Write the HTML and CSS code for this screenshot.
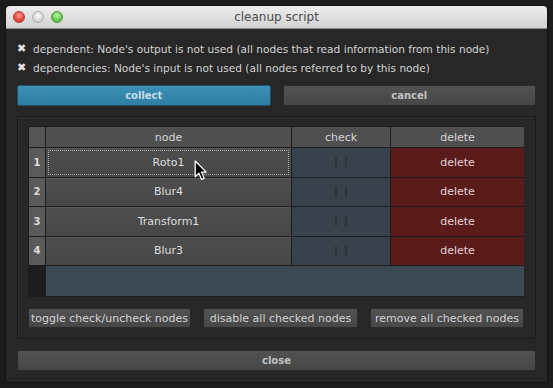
FILE: index.html
```html
<!DOCTYPE html>
<html lang="en">
<head>
<meta charset="UTF-8">
<title>cleanup script</title>
<link rel="stylesheet" href="styles.css">
</head>
<body>
<div class="window">
    <div class="titlebar">
        <div class="lights">
            <span class="light red"></span>
            <span class="light gray"></span>
            <span class="light green"></span>
        </div>
        <div class="title">cleanup script</div>
        <div></div>
    </div>
    <div class="content">
        <div class="options">
            <label class="option"><span class="tick">&#10006;</span>dependent: Node's output is not used (all nodes that read information from this node)</label>
            <label class="option"><span class="tick">&#10006;</span>dependencies: Node's input is not used (all nodes referred to by this node)</label>
        </div>
        <div class="button-row">
            <button class="button primary">collect</button>
            <button class="button">cancel</button>
        </div>
        <div class="group">
            <div class="table">
                <div class="corner"></div>
                <div class="head">node</div>
                <div class="head">check</div>
                <div class="head">delete</div>

                <div class="num">1</div>
                <div class="node focused"><span>Roto1</span></div>
                <div class="check"><span class="box"></span></div>
                <div class="del">delete</div>

                <div class="num">2</div>
                <div class="node"><span>Blur4</span></div>
                <div class="check"><span class="box"></span></div>
                <div class="del">delete</div>

                <div class="num">3</div>
                <div class="node"><span>Transform1</span></div>
                <div class="check"><span class="box"></span></div>
                <div class="del">delete</div>

                <div class="num">4</div>
                <div class="node"><span>Blur3</span></div>
                <div class="check"><span class="box"></span></div>
                <div class="del">delete</div>

                <div class="corner"></div>
                <div class="filler"></div>

                <svg class="cursor" width="14" height="21" viewBox="0 0 13 20">
                    <path d="M1 1 L1 16 L4.5 12.5 L7 18.5 L9.5 17.5 L7 11.5 L11.5 11.5 Z" fill="#000" stroke="#fff" stroke-width="1.2" stroke-linejoin="round"/>
                </svg>
            </div>
            <div class="actions">
                <button class="button small">toggle check/uncheck nodes</button>
                <button class="button small">disable all checked nodes</button>
                <button class="button small">remove all checked nodes</button>
            </div>
        </div>
        <button class="button close">close</button>
    </div>
</div>
</body>
</html>
```

FILE: styles.css
```css
body {
    margin: 0;
    padding: 5px;
    background-color: #1c1c1c;
    font-family: "DejaVu Sans", Verdana, sans-serif;
}
.window {
    width: 543px;
    height: 378px;
    box-sizing: border-box;
    background-color: #272727;
    border: 1px solid #121212;
    border-radius: 5px 5px 3px 3px;
    overflow: hidden;
}
.titlebar {
    height: 22px;
    display: grid;
    grid-template-columns: 1fr auto 1fr;
    align-items: center;
    background: linear-gradient(#ededed, #d2d2d2);
    border-bottom: 1px solid #8e8e8e;
}
.lights {
    display: flex;
    gap: 7px;
    padding-left: 7px;
}
.light {
    width: 12px;
    height: 12px;
    border-radius: 50%;
    box-sizing: border-box;
}
.light.red {
    background: radial-gradient(circle at 50% 35%, #ff9a92, #e84a42 55%, #b8322c);
    border: 1px solid #b1403a;
}
.light.gray {
    background: radial-gradient(circle at 50% 35%, #fafafa, #d8d8d8 60%, #bdbdbd);
    border: 1px solid #ababab;
}
.light.green {
    background: radial-gradient(circle at 50% 35%, #c0f5aa, #68cc56 55%, #42a036);
    border: 1px solid #4c9a3f;
}
.title {
    font-size: 12px;
    color: #4b4b4b;
}
.content {
    padding: 10px 11px 0;
}
.options {
    display: flex;
    flex-direction: column;
}
.option {
    height: 19px;
    display: flex;
    align-items: center;
    font-size: 10.6px;
    color: #d4d4d4;
}
.tick {
    width: 16px;
    font-size: 11px;
    color: #e4e4e4;
}
.button-row {
    display: flex;
    gap: 12px;
    margin-top: 8px;
}
.button {
    flex: 1;
    height: 21px;
    padding: 0;
    font-family: inherit;
    font-size: 10px;
    font-weight: bold;
    color: #c2c2c2;
    background: linear-gradient(#525252, #474747);
    border: 1px solid #2b2b2b;
    border-radius: 2px;
    cursor: pointer;
}
.button.primary {
    color: #c8dde8;
    background: linear-gradient(#3b90b6, #2f7ea2);
    border-color: #1f5068;
}
.group {
    margin-top: 10px;
    border: 1px solid #191919;
    box-shadow: inset 1px 1px 0 #2c2c2c;
    border-radius: 2px;
    padding: 9px 11px 10px 10px;
}
.table {
    position: relative;
    height: 171px;
    box-sizing: border-box;
    display: grid;
    grid-template-columns: 16px 245px 98px 133px;
    grid-template-rows: 20px repeat(4, 28.5px) 1fr;
    gap: 1px;
    padding: 1px;
    background-color: #1d1d1d;
    font-size: 11px;
}
.corner {
    background-color: #1d1d1d;
}
.corner:first-child {
    background-color: #555;
}
.head {
    display: flex;
    align-items: center;
    justify-content: center;
    background-color: #4f4f4f;
    color: #d6d6d6;
}
.num {
    display: flex;
    align-items: center;
    justify-content: center;
    background-color: #5a5a5a;
    color: #dcdcdc;
    font-size: 10px;
    font-weight: bold;
}
.node {
    display: flex;
    align-items: center;
    justify-content: center;
    background: linear-gradient(#4e4e4e, #474747);
    box-shadow: inset 0 1px 0 #5a5a5a;
    color: #dedede;
}
.node.focused span {
    display: flex;
    align-items: center;
    justify-content: center;
    width: calc(100% - 4px);
    height: calc(100% - 4px);
    box-sizing: border-box;
    border: 1px dotted #a8a8a8;
}
.check {
    display: flex;
    align-items: center;
    justify-content: center;
    background-color: #37424c;
}
.box {
    width: 8px;
    height: 10px;
    border-left: 2px solid #2b333b;
    border-right: 2px solid #2b333b;
}
.del {
    display: flex;
    align-items: center;
    justify-content: center;
    background-color: #5a1b1b;
    color: #e2d2d2;
}
.filler {
    grid-column: span 3;
    background-color: #3c4853;
}
.cursor {
    position: absolute;
    left: 166px;
    top: 34px;
}
.actions {
    display: grid;
    grid-template-columns: 163fr 155fr 154fr;
    gap: 12px;
    margin-top: 11px;
}
.button.small {
    height: 20px;
    font-size: 11px;
    font-weight: normal;
    color: #d2d2d2;
    white-space: nowrap;
}
.button.close {
    width: 100%;
    margin-top: 11px;
}
```
